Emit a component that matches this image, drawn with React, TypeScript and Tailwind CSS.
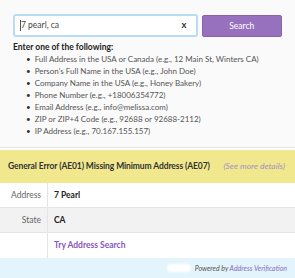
const EXAMPLES = [
  'Full Address in the USA or Canada (e.g., 12 Main St, Winters CA)',
  "Person's Full Name in the USA (e.g., John Doe)",
  'Company Name in the USA (e.g., Honey Bakery)',
  'Phone Number (e.g., +18006354772)',
  'Email Address (e.g., info@melissa.com)',
  'ZIP or ZIP+4 Code (e.g., 92688 or 92688-2112)',
  'IP Address (e.g., 70.167.155.157)',
]

const ROWS = [
  { label: 'Address', value: '7 Pearl' },
  { label: 'State', value: 'CA' },
]

export default function App() {
  return (
    <div className="h-[278px] w-[295px] overflow-hidden bg-white font-['Lato',sans-serif] text-[#222]">
      <div className="h-[148px] border-b border-[#e6e6e6] bg-[#fafafa]">
        <div className="flex gap-[4px] px-[13px] pt-[14px]">
          <div className="flex h-[23px] w-[190px] items-center rounded-[3px] border-2 border-[#b9dcf5] bg-white pl-[5px] pr-[9px]">
            <span className="h-[11px] w-px bg-[#555]" />
            <span className="flex-1 text-[8.5px] text-[#444]">7 pearl, ca</span>
            <span className="text-[9.5px] font-bold text-[#333]">x</span>
          </div>
          <button
            type="button"
            className="mt-px h-[22px] w-[83px] rounded-[2px] border border-[#8a62ad] bg-[#9771bd] text-[8.5px] text-white"
          >
            Search
          </button>
        </div>
        <p className="mt-[4px] px-[13px] text-[8.5px] leading-[12px] font-bold">Enter one of the following:</p>
        <ul className="pl-[26px] text-[8px] leading-[12px] text-[#555]">
          {EXAMPLES.map((e) => (
            <li key={e} className="flex gap-[4px]">
              <span className="text-[#333]">•</span>
              <span>{e}</span>
            </li>
          ))}
        </ul>
      </div>
      <div className="mt-[2px] flex h-[33px] items-center justify-between bg-[#f1e78d] pl-[8px] pr-[10px] text-[8.5px]">
        <span className="font-bold tracking-[-0.1px] text-[#333]">General Error (AE01) Missing Minimum Address (AE07)</span>
        <span className="italic text-[#a690c6]">(See more details)</span>
      </div>
      {ROWS.map((r, i) => (
        <div
          key={r.label}
          className={`flex h-[25px] items-center border-b border-[#e4e4e4] text-[8.5px] ${i % 2 ? 'bg-[#f2f2f2]' : 'bg-white'}`}
        >
          <span className="w-[48px] self-stretch border-r border-[#e4e4e4] pr-[6px] text-right leading-[24px] text-[#666]">
            {r.label}
          </span>
          <span className="pl-[6px] font-bold text-[#222]">{r.value}</span>
        </div>
      ))}
      <div className="flex h-[25px] items-center text-[8.5px]">
        <span className="w-[48px] self-stretch border-r border-[#e4e4e4]" />
        <span className="pl-[6px] font-bold text-[#8756bf]">Try Address Search</span>
      </div>
      <div className="flex h-[20px] items-center justify-end gap-[4px] bg-[#e4f4fc] pr-[8px] text-[7px] italic">
        <span className="h-[8px] w-[24px] rounded-full bg-white blur-[1px]" />
        <span className="text-[#555]">
          Powered by <span className="text-[#8a6cc0]">Address Verification</span>
        </span>
      </div>
    </div>
  )
}
